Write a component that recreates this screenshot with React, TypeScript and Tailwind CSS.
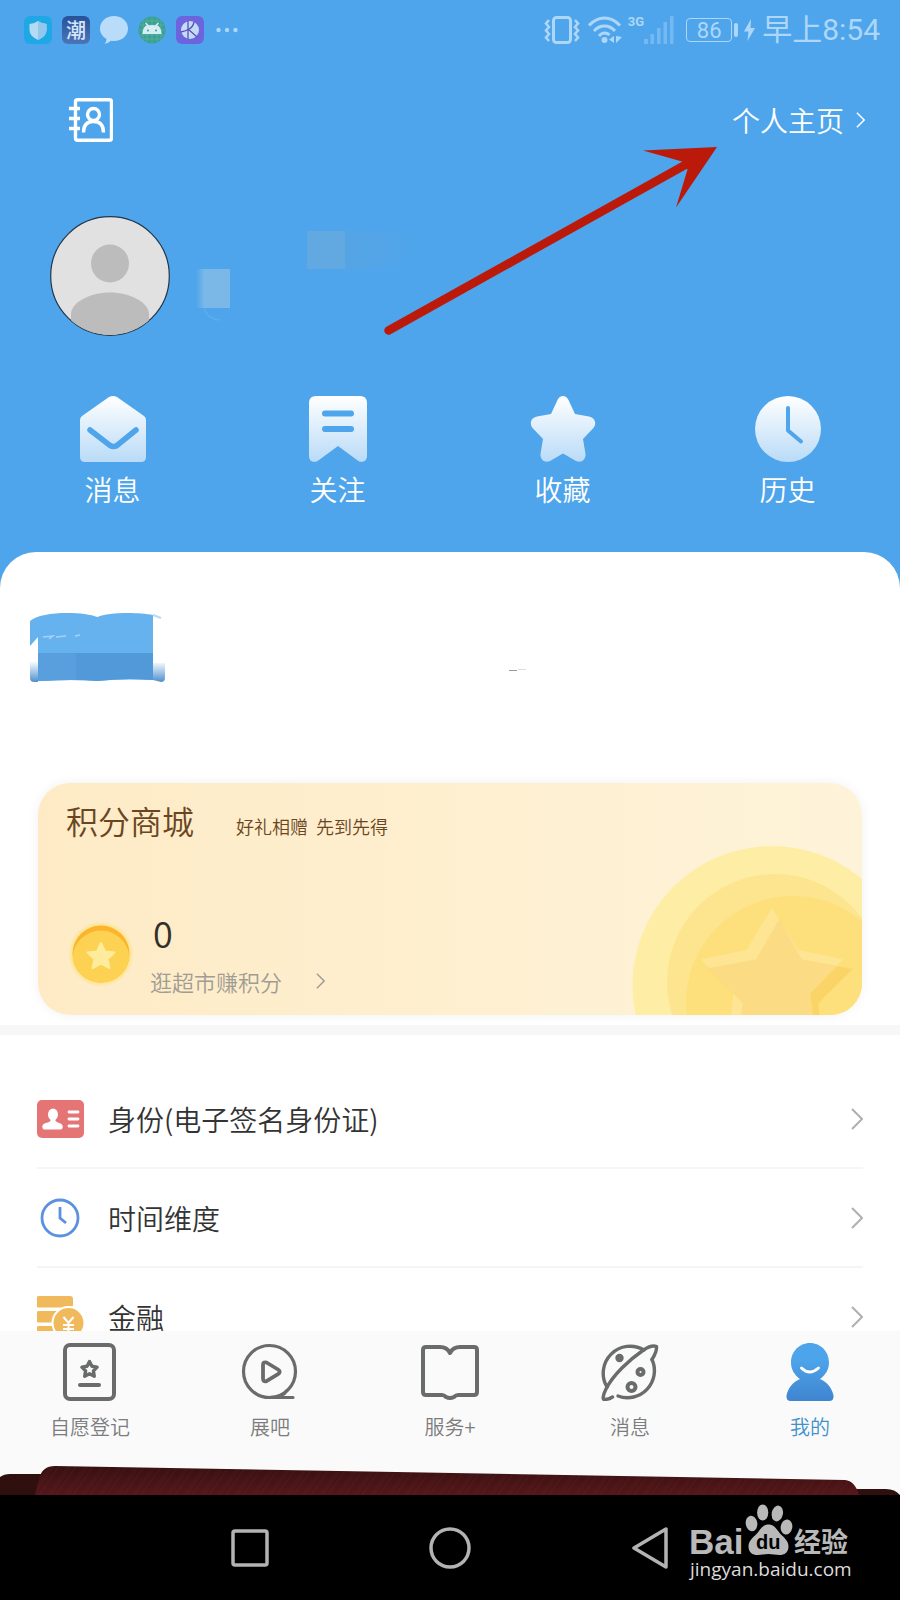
import React from "react";

type IconProps = { className?: string };

const quickLinks = [
  { label: "消息", icon: <MailIcon /> },
  { label: "关注", icon: <BookmarkIcon /> },
  { label: "收藏", icon: <StarIcon /> },
  { label: "历史", icon: <HistoryIcon /> },
];

const menuItems = [
  { label: "身份(电子签名身份证)", icon: <IdCardIcon /> },
  { label: "时间维度", icon: <ClockIcon /> },
  { label: "金融", icon: <MoneyIcon /> },
];

const tabs = [
  { label: "自愿登记", icon: <RegisterIcon />, active: false },
  { label: "展吧", icon: <PlayIcon />, active: false },
  { label: "服务+", icon: <BookIcon />, active: false },
  { label: "消息", icon: <PlanetIcon />, active: false },
  { label: "我的", icon: <MeIcon />, active: true },
];

function Chevron({ className }: IconProps) {
  return (
    <svg viewBox="0 0 12 22" fill="none" stroke="currentColor" strokeWidth="2" className={className}>
      <path d="M1 1l10 10L1 21" />
    </svg>
  );
}

// white to pale blue fade shared by the four shortcut icons
function Fade({ id }: { id: string }) {
  return (
    <defs>
      <linearGradient id={id} x1="0" y1="0" x2="0" y2="66" gradientUnits="userSpaceOnUse">
        <stop offset="0" stopColor="#ffffff" />
        <stop offset="1" stopColor="#b9dbf7" />
      </linearGradient>
    </defs>
  );
}

function MailIcon() {
  return (
    <svg viewBox="0 0 66 66" fill="none" className="size-[66px]">
      <Fade id="mail" />
      <path d="M29 1q4-2 8 0l27 19q2 1.500 2 4v37q0 5-5 5H5q-5 0-5-5V24q0-2.500 2-4z" fill="url(#mail)" />
      <path d="M10 34l20 15.500q3.500 2 7 0L56 34" stroke="#4ea5eb" strokeWidth="5.500" strokeLinecap="round" />
    </svg>
  );
}

function BookmarkIcon() {
  return (
    <svg viewBox="0 0 66 66" fill="none" className="size-[66px]">
      <Fade id="bookmark" />
      <path d="M4 7q0-7 7-7h44q7 0 7 7v53c0 6-6 7.500-10 4L33 50 14 64c-4 3.500-10 2-10-4z" fill="url(#bookmark)" />
      <path d="M20 17.500h26M20 33h26" stroke="#4ea5eb" strokeWidth="6" strokeLinecap="round" />
    </svg>
  );
}

function StarIcon() {
  return (
    <svg viewBox="0 0 66 66" fill="none" className="size-[66px]">
      <Fade id="star" />
      <path
        d="M27.500 4c2.500-5.300 8.500-5.300 11 0L45 18l14 2.500c6.500 1.500 8 7.500 4 12L53 43l2.500 15c.5 6-4.500 9.500-9.500 7L33 57.500 20 65c-5 2.500-10-1-9.500-7L13 43 3 32.500c-4-4.500-2.500-10.500 4-12L21 18z"
        fill="url(#star)"
      />
    </svg>
  );
}

function HistoryIcon() {
  return (
    <svg viewBox="0 0 66 66" fill="none" className="size-[66px]">
      <Fade id="history" />
      <circle cx="33" cy="33" r="33" fill="url(#history)" />
      <path d="M33 12v22.500L46 45.500" stroke="#4ea5eb" strokeWidth="4" strokeLinecap="round" strokeLinejoin="round" />
    </svg>
  );
}

function IdCardIcon() {
  return (
    <svg viewBox="0 0 48 40" className="h-[40px] w-[48px]">
      <rect x="0" y="1" width="47" height="38" rx="5" fill="#e57474" />
      <ellipse cx="16" cy="15.500" rx="5" ry="6" fill="#fff" />
      <path d="M13.500 19h5v3q1 1 5 2.500 3 1.500 2 4.500-.5 1.500-2 1.500H7.500q-1.500 0-2-1.500-1-3 2-4.500 5-1.500 6-2.500z" fill="#fff" />
      <path d="M32 13h9M32 20h9M32 27h9" stroke="#fff" strokeWidth="2.800" strokeLinecap="round" />
    </svg>
  );
}

function ClockIcon() {
  return (
    <svg viewBox="0 0 48 40" fill="none" stroke="#5b92e0" strokeWidth="2.800" className="h-[40px] w-[48px]">
      <circle cx="23" cy="20" r="18" />
      <path d="M23 9v11l6 5" />
    </svg>
  );
}

function MoneyIcon() {
  return (
    <svg viewBox="0 0 48 48" className="size-[48px]">
      <g fill="#f0b95c">
        <rect x="-1" y="3" width="37" height="11.500" rx="3" />
        <rect x="-1" y="18" width="37" height="11.500" rx="3" />
        <rect x="-1" y="33" width="30" height="11" rx="3" />
      </g>
      <circle cx="31.500" cy="30" r="17" fill="#fff" />
      <circle cx="31.500" cy="30" r="15" fill="#f0b95c" />
      <path d="M26.500 24l5 6 5-6M31.500 30v11M26 32h11M26 36h11" fill="none" stroke="#fff" strokeWidth="2" />
    </svg>
  );
}

function RegisterIcon() {
  return (
    <svg viewBox="0 0 58 58" fill="none" stroke="#6a6b6b" strokeLinejoin="round" className="size-[58px]">
      <rect x="4" y="2" width="49" height="54" rx="5" strokeWidth="4" />
      <path d="M28.500 18.500l2.400 4.800 5.200.8-3.700 3.800.9 5.300-4.800-2.500-4.800 2.500.9-5.300-3.700-3.800 5.200-.8z" strokeWidth="3.400" />
      <path d="M19 42h19" strokeWidth="4" strokeLinecap="round" />
    </svg>
  );
}

function PlayIcon() {
  return (
    <svg viewBox="0 0 58 58" fill="none" stroke="#6a6b6b" strokeLinejoin="round" className="size-[58px]">
      <circle cx="28.500" cy="28.500" r="26" strokeWidth="3.200" />
      <path d="M28.500 54.500H52M28 54.500q14 0 18-7" strokeWidth="3.200" strokeLinecap="round" />
      <path d="M22 22q0-3.500 3.500-2.500l11.500 7q3.500 2.300 0 4.600l-11.500 7Q22 39 22 35.500z" strokeWidth="3.800" />
    </svg>
  );
}

function BookIcon() {
  return (
    <svg viewBox="0 0 58 58" fill="none" stroke="#6a6b6b" strokeLinejoin="round" className="size-[58px]">
      <path
        d="M5 4h14q7 0 10 6 3-6 10-6h14q3 0 3 3v42q0 3-3 3H37q-2 0-4 2-4 2-8 0-2-2-4-2H5q-3 0-3-3V7q0-3 3-3z"
        strokeWidth="4"
      />
    </svg>
  );
}

function PlanetIcon() {
  return (
    <svg viewBox="0 0 58 58" fill="none" stroke="#6a6b6b" strokeLinecap="round" strokeLinejoin="round" className="size-[58px]">
      <path d="M6 44A27 27 0 0 1 43 7" strokeWidth="3.400" />
      <path d="M51 16.500A27 27 0 0 1 17 53" strokeWidth="3.400" />
      <path d="M51 16.500q5-8 4.500-13-5-2-13 3.500C28 17 12 32 5 46 1.500 53 1.500 57 3.500 56.500q4 0 8-2.500" strokeWidth="3.400" />
      <circle cx="18.500" cy="15" r="2" strokeWidth="4.400" />
      <circle cx="39.500" cy="29" r="3" strokeWidth="4" />
      <circle cx="30.500" cy="44" r="4" strokeWidth="4" />
    </svg>
  );
}

function MeIcon() {
  return (
    <svg viewBox="0 0 58 58" className="size-[58px]">
      <defs>
        <linearGradient id="me" x1="0" y1="0" x2="0" y2="58" gradientUnits="userSpaceOnUse">
          <stop offset="0.300" stopColor="#4da4ea" />
          <stop offset="1" stopColor="#3f84cf" />
        </linearGradient>
      </defs>
      <path
        d="M29 0c11 0 19 9 19 19.500 0 7-3.500 12.500-9 16.500 7 3 12 9 13.500 16.500Q53 58 48 58H10q-5 0-4.500-5.500C7 45 12 39 19 36c-5.500-4-9-9.500-9-16.500C10 9 18 0 29 0z"
        fill="url(#me)"
      />
      <path d="M20.500 25q8 8 17 0" fill="none" stroke="#fff" strokeWidth="3" strokeLinecap="round" />
    </svg>
  );
}

function StatusBar() {
  return (
    <div className="flex h-[60px] shrink-0 items-center justify-between pl-6 pr-5 text-[#add7f8]">
      <div className="flex items-center gap-[10px]">
        <svg viewBox="0 0 28 28" className="size-7">
          <rect width="28" height="28" rx="6" fill="#1ea9e6" />
          <path d="M14 5q4 3 8.500 3v6q0 6-8.500 10Q5.500 20 5.500 14V8Q10 8 14 5z" fill="#b5daf3" />
          <path d="M14 5q4 3 8.500 3v6q0 6-8.500 10z" fill="#93c8ec" />
        </svg>
        <span className="flex size-7 items-center justify-center rounded-md bg-gradient-to-b from-[#25529a] to-[#4d74b8] text-[20px] leading-7 font-medium text-[#d5e6f8]">
          潮
        </span>
        <svg viewBox="0 0 28 28" className="size-7" fill="#b8dcf9">
          <path d="M14 0c8 0 14 5.500 14 12.500S22 25 14 25q-1.500 0-3-.3-3 2.800-6.500 3 2-2 2-4.700C2.500 20.500 0 17 0 12.500 0 5.500 6 0 14 0z" />
        </svg>
        <svg viewBox="0 0 28 28" className="size-7">
          <circle cx="14" cy="14" r="13.500" fill="#3aa091" />
          <path d="M5 5h18v18H5zM14 1v26M1 14h26M9 2v24M19 2v24M2 9h24M2 19h24" fill="none" stroke="#5fb9a9" strokeWidth="0.600" />
          <path d="M5 18q.5-7 5-8.500L7.500 7M23 18q-.5-7-5-8.500L20.500 7" fill="none" stroke="#d5edf3" strokeWidth="1.400" />
          <path d="M5 18q1-9 9-9t9 9z" fill="#d5edf3" />
          <circle cx="10" cy="14.500" r="1" fill="#3aa091" />
          <circle cx="18" cy="14.500" r="1" fill="#3aa091" />
        </svg>
        <svg viewBox="0 0 28 28" className="size-7">
          <rect width="28" height="28" rx="6" fill="#6c64dd" />
          <circle cx="14" cy="14" r="9" fill="#c3dbf6" />
          <path d="M12 5v18M5 16q5-1 8-3M12 13l9 8M13 13q4-2 5-7" fill="none" stroke="#5a50b8" strokeWidth="1.300" />
        </svg>
        <svg viewBox="0 0 22 6" className="ml-[2px] h-[6px] w-[22px]" fill="currentColor">
          <circle cx="2.500" cy="3" r="2.200" />
          <circle cx="11" cy="3" r="2.200" />
          <circle cx="19.500" cy="3" r="2.200" />
        </svg>
      </div>
      <div className="flex items-center">
        <svg viewBox="0 0 36 28" className="h-7 w-9" fill="none" stroke="currentColor">
          <rect x="9.500" y="1.500" width="17" height="25" rx="3" strokeWidth="3" />
          <path d="M5 4L2 7.500 5 11 2 14.500 5 18l-3 3.500L5 25M31 4l3 3.500-3 3.500 3 3.500-3 3.500 3 3.500-3 3.500" strokeWidth="2.600" />
        </svg>
        <svg viewBox="0 0 34 28" className="ml-2 h-7 w-[34px]" fill="none" stroke="currentColor" strokeWidth="3">
          <path d="M1 9.500Q8 2 16.500 2T32 9.500M6 15q4.500-5 10.500-5T27 15M11 20q2.500-3 5.500-3t5 2" />
          <circle cx="16.500" cy="24" r="3" fill="currentColor" stroke="none" />
          <path d="M26 20v7l-5-3.500zM28 20l6 1-6 6z" fill="currentColor" stroke="none" />
        </svg>
        <div className="ml-[6px] flex items-end">
          <span className="self-start font-[Roboto,sans-serif] text-[13px] leading-3 font-bold">3G</span>
          <svg viewBox="0 0 30 28" className="h-7 w-[30px]" fill="#74b9f1">
            <rect x="0" y="23" width="4" height="5" />
            <rect x="6.500" y="18" width="3.500" height="10" />
            <rect x="13" y="12" width="3.500" height="16" />
            <rect x="19.500" y="6" width="3.500" height="22" />
            <rect x="26" y="0" width="3.500" height="28" />
          </svg>
        </div>
        <span className="ml-3 h-6 w-[46px] rounded-[4px] border border-current text-center font-[Roboto,sans-serif] text-[22px] leading-6">
          86
        </span>
        <span className="ml-[2px] h-[14px] w-1 rounded-sm bg-current" />
        <svg viewBox="0 0 11 22" className="ml-[6px] h-[22px] w-[11px]" fill="currentColor">
          <path d="M7 0L0 12.500h4.500L3.500 22 11 9H6.500z" />
        </svg>
        <span className="ml-[7px] font-[Roboto,'Noto_Sans_CJK_SC',sans-serif] text-[30px] leading-9">早上8:54</span>
      </div>
    </div>
  );
}

function ProfileHeader() {
  return (
    <header className="relative pt-[38px] pb-[47px] text-white">
      <div className="flex items-center justify-between pr-[35px] pl-[69px]">
        <button aria-label="通讯录">
          <svg viewBox="0 0 44 44" fill="none" stroke="currentColor" strokeWidth="3.400" className="size-11">
            <rect x="6.500" y="1.700" width="36" height="40.600" rx="2" />
            <path d="M0 10.500h11M0 20.500h11M0 30.500h11" />
            <circle cx="24.500" cy="16.500" r="6" />
            <path d="M14.500 34.500q0-11 10-11t10 11" />
          </svg>
        </button>
        <a href="#home" className="flex items-center gap-3 text-[28px] leading-8 font-[350]">
          个人主页
          <Chevron className="h-4 w-[9px]" />
        </a>
      </div>

      <div className="mt-[74px] flex pl-[50px]">
        <svg viewBox="0 0 120 120" className="size-[120px]">
          <defs>
            <clipPath id="avatar">
              <circle cx="60" cy="60" r="59" />
            </clipPath>
          </defs>
          <circle cx="60" cy="60" r="59.300" fill="#e1e1e1" stroke="#23384a" strokeWidth="1.200" />
          <g clipPath="url(#avatar)" fill="#bcbcbc">
            <circle cx="60" cy="47.500" r="19" />
            <path d="M21 120V98c0-11 18-21.500 39-21.500S99 87 99 98v22z" />
          </g>
        </svg>
        {/* hidden nickname */}
        <svg viewBox="0 0 240 120" className="ml-5 h-[120px] w-[240px]">
          <defs>
            <linearGradient id="mask">
              <stop offset="0" stopColor="#7bb8e8" stopOpacity="0" />
              <stop offset="0.250" stopColor="#7bb8e8" />
            </linearGradient>
            <linearGradient id="mask2">
              <stop offset="0" stopColor="#55a4e4" />
              <stop offset="1" stopColor="#55a4e4" stopOpacity="0" />
            </linearGradient>
          </defs>
          <rect x="6" y="53" width="34" height="39" fill="url(#mask)" />
          <path d="M14 92q3 11 16 12" fill="none" stroke="#5eacee" strokeWidth="1.500" />
          <rect x="117" y="15" width="38" height="38" fill="#62a8e1" />
          <rect x="155" y="15" width="78" height="38" fill="url(#mask2)" />
        </svg>
      </div>

      <nav className="mt-[60px] grid grid-cols-4">
        {quickLinks.map((link) => (
          <a key={link.label} href="#quick" className="flex flex-col items-center gap-[11px] text-[28px] leading-8 font-[350]">
            {link.icon}
            {link.label}
          </a>
        ))}
      </nav>

      {/* arrow pointing at the homepage link */}
      <svg viewBox="0 0 336 192" className="pointer-events-none absolute top-[86px] right-[182px] h-[192px] w-[336px]" fill="none">
        <path d="M6.500 184.500L303 19" stroke="#bb1a0b" strokeWidth="8.500" strokeLinecap="round" />
        <path d="M335 1l-74 3.500 39 11 5.500 8L294 61.500z" fill="#bb1a0b" />
      </svg>
    </header>
  );
}

function PointsCard() {
  return (
    <section className="relative mx-[38px] overflow-hidden rounded-[32px] bg-gradient-to-r from-[#feebc6] to-[#fef3d9] px-7 pt-[18px] pb-5 shadow-[0_0_12px_rgba(0,0,0,0.060)]">
      <svg viewBox="0 0 230 169" className="absolute right-0 bottom-0 h-[169px] w-[230px]">
        <defs>
          <clipPath id="starClip">
            <path d="M139.700 61.700L114.700 104l-46 9.300 32.600 34L99 169h81.700l-2.700-21.700 33.300-34-45-9.300z" />
          </clipPath>
        </defs>
        <circle cx="140" cy="139.500" r="139.500" fill="#feeea5" />
        <circle cx="143" cy="136" r="108" fill="#fde48e" />
        <circle cx="161" cy="157" r="107" fill="#fddf7b" />
        <path d="M147.300 73L124 113.300l-47.700 9 34.400 35L109 169h78.300l-1-11.700L220.700 123l-51-9.700z" fill="#fbd468" />
        <path d="M139.700 61.700L114.700 104l-46 9.300 32.600 34L99 169h81.700l-2.700-21.700 33.300-34-45-9.300z" fill="#fee593" />
        <path
          d="M147.300 73L124 113.300l-47.700 9 34.400 35L109 169h78.300l-1-11.700L220.700 123l-51-9.700z"
          fill="#fcdb85"
          clipPath="url(#starClip)"
        />
      </svg>
      <div className="relative flex items-baseline gap-[42px] text-[#6a4521]">
        <h2 className="text-[32px] leading-[38px] font-[350]">积分商城</h2>
        <p className="text-[18px] leading-6 font-[350] whitespace-pre">好礼相赠  先到先得</p>
      </div>
      <div className="relative mt-[73px] flex items-center gap-4 pl-[2px]">
        <svg viewBox="0 0 66 66" className="size-[66px]">
          <defs>
            <radialGradient id="glow">
              <stop offset="0.850" stopColor="#fde489" />
              <stop offset="1" stopColor="#fde489" stopOpacity="0" />
            </radialGradient>
            <clipPath id="coin">
              <circle cx="33" cy="33" r="28.500" />
            </clipPath>
          </defs>
          <circle cx="33" cy="33" r="33" fill="url(#glow)" />
          <circle cx="33" cy="33" r="28.500" fill="#fbb42c" />
          <circle cx="33" cy="38" r="28.500" fill="#fdd152" clipPath="url(#coin)" />
          <path
            d="M33 22l4 8.500 9.500 1-7 6.500 2 9-8.500-4.500-8.500 4.500 2-9-7-6.500 9.500-1z"
            fill="#feec9c"
            stroke="#feec9c"
            strokeWidth="2"
            strokeLinejoin="round"
          />
        </svg>
        <div className="flex flex-col gap-[15px]">
          <span className="pl-[3px] text-[36px] leading-10 font-[350] text-[#333029]">0</span>
          <a href="#points" className="flex items-center gap-[34px] text-[22px] leading-7 font-[350] text-[#a09c94]">
            逛超市赚积分
            <Chevron className="h-4 w-[9px]" />
          </a>
        </div>
      </div>
    </section>
  );
}

function BookBanner() {
  return (
    <svg viewBox="0 0 540 75" className="mx-7 h-[75px] w-[540px]">
      <defs>
        <linearGradient id="corner" x1="0" y1="0" x2="0" y2="1">
          <stop offset="0" stopColor="#5299d9" stopOpacity="0" />
          <stop offset="1" stopColor="#4f8fcb" />
        </linearGradient>
      </defs>
      <path d="M2 10C12 0 55 0 69.500 6 80 1 110 1 125 4v65q-30-2-55.500 1Q45 68 10 70V26L2 35z" fill="#65b2ee" />
      <path d="M10 42h115v27q-30-2-55.500 1Q45 68 10 70z" fill="#5299d9" />
      <path d="M10 42h38v27q-20 0-38 1z" fill="#5a9fdd" />
      <path d="M2 50h8v21H6q-4 0-4-4zM125 52h12v15q0 4-4 4l-8-2z" fill="url(#corner)" />
      <path d="M125 4l8 3" stroke="#b5dbf7" strokeWidth="2" />
      <path d="M15 26l10-1-4 3M28 26l10-1M47 25l5-1" fill="none" stroke="#a5d2f6" strokeWidth="1.500" />
      <path d="M481 59.500h8" stroke="#999" />
      <path d="M490 58.500h8" stroke="#ddd" />
    </svg>
  );
}

function BaiduLogo({ className }: IconProps) {
  return (
    <svg viewBox="0 0 164 82" className={className} fill="#b9b9b9">
      <text x="1" y="51" fontFamily="Liberation Sans, sans-serif" fontWeight="bold" fontSize="35">
        Bai
      </text>
      <ellipse cx="63.500" cy="20.500" rx="5.800" ry="7.800" transform="rotate(-8 63.500 20.500)" />
      <ellipse cx="74.700" cy="9.500" rx="5.600" ry="8" />
      <ellipse cx="89.300" cy="10.500" rx="5.600" ry="8" transform="rotate(12 89.300 10.500)" />
      <ellipse cx="98.500" cy="24" rx="5.800" ry="7.500" transform="rotate(10 98.500 24)" />
      <path d="M80.500 21.500c6 0 8 5 12 9.500 4 4 8 7 8 12.500 0 6-4 8.500-9 8.500-4 0-7-1-11-1s-7 1-11 1c-5 0-9-2.500-9-8.500 0-5.500 4-8.500 8-12.500 4-4.500 6-9.500 12-9.500z" />
      <text x="68" y="46" fontFamily="Liberation Sans, sans-serif" fontWeight="bold" fontSize="20" fill="#000">
        du
      </text>
      <text x="106" y="49" fontFamily="Noto Sans CJK SC, sans-serif" fontWeight="bold" fontSize="27">
        经验
      </text>
      <text x="2" y="73" fontFamily="Open Sans, sans-serif" fontSize="19" fill="#dcdcdc">
        jingyan.baidu.com
      </text>
    </svg>
  );
}

function SystemBar() {
  return (
    <footer className="relative h-[105px] shrink-0 bg-black">
      <div className="mx-auto grid h-full w-2/3 grid-cols-3 place-items-center text-[#b3b3b3]">
        <button aria-label="最近任务">
          <svg viewBox="0 0 42 42" fill="none" stroke="currentColor" strokeWidth="3.500" className="size-[42px]">
            <rect x="4" y="4" width="34" height="34" rx="2" />
          </svg>
        </button>
        <button aria-label="主屏幕">
          <svg viewBox="0 0 42 42" fill="none" stroke="currentColor" strokeWidth="3.500" className="size-[42px]">
            <circle cx="21" cy="21" r="19" />
          </svg>
        </button>
        <button aria-label="返回">
          <svg viewBox="0 0 42 42" fill="none" stroke="currentColor" strokeWidth="3.500" strokeLinejoin="round" className="size-[42px]">
            <path d="M37 2v38L5 21z" />
          </svg>
        </button>
      </div>
      <BaiduLogo className="absolute top-2 right-[48px] h-[82px] w-[164px]" />
    </footer>
  );
}

function TabBar() {
  return (
    <nav className="shrink-0 bg-[#fafafa] pt-3">
      <div className="grid grid-cols-5">
        {tabs.map((tab) => (
          <a
            key={tab.label}
            href="#tab"
            className={`flex flex-col items-center gap-[14px] text-[20px] leading-6 font-[350] ${
              tab.active ? "text-[#4191cc]" : "text-[#7c7c7c]"
            }`}
          >
            {tab.icon}
            {tab.label}
          </a>
        ))}
      </div>
      {/* top edge of the card stack behind the app */}
      <svg viewBox="0 0 900 30" preserveAspectRatio="none" className="mt-[26px] block h-[30px] w-full">
        <defs>
          <linearGradient id="leather" x1="0" y1="0" x2="0" y2="1">
            <stop offset="0" stopColor="#38100f" />
            <stop offset="1" stopColor="#55161b" />
          </linearGradient>
          <pattern id="grain" width="17" height="30" patternUnits="userSpaceOnUse" patternTransform="skewX(-35)">
            <rect width="5" height="30" fill="#fff" opacity="0.012" />
            <rect x="8" width="2" height="30" fill="#fff" opacity="0.020" />
          </pattern>
        </defs>
        <path d="M0 12Q4 9 10 9h40v21H0zM850 24h36q9 0 14 6h-50z" fill="#30100f" />
        <path d="M35 30l4-16q3-13 16-13l790 14q10 1 14 15z" fill="url(#leather)" />
        <path d="M35 30l4-16q3-13 16-13l790 14q10 1 14 15z" fill="url(#grain)" />
      </svg>
    </nav>
  );
}

function App() {
  return (
    <div className="flex h-screen flex-col bg-[#4ea5eb] font-['Noto_Sans_CJK_SC',sans-serif]">
      <StatusBar />
      <main className="min-h-0 flex-1 overflow-y-auto [scrollbar-width:none]">
        <ProfileHeader />
        <div className="rounded-t-[36px] bg-white pt-[59px]">
          <BookBanner />
          <div className="mt-[97px]">
            <PointsCard />
          </div>
          <div className="mt-[10px] h-[10px] bg-[#f7f7f7]" />
          <ul className="px-[37px] pt-[35px]">
            {menuItems.map((item) => (
              <li key={item.label} className="border-b-2 border-[#f5f5f5]">
                <a href="#menu" className="flex h-[97px] items-center text-[28px] leading-9 font-[350] text-[#333333]">
                  {item.icon}
                  <span className="ml-[23px] flex-1">{item.label}</span>
                  <Chevron className="h-[22px] w-3 text-[#b0b0b0]" />
                </a>
              </li>
            ))}
          </ul>
        </div>
      </main>
      <TabBar />
      <SystemBar />
    </div>
  );
}

export default App;
